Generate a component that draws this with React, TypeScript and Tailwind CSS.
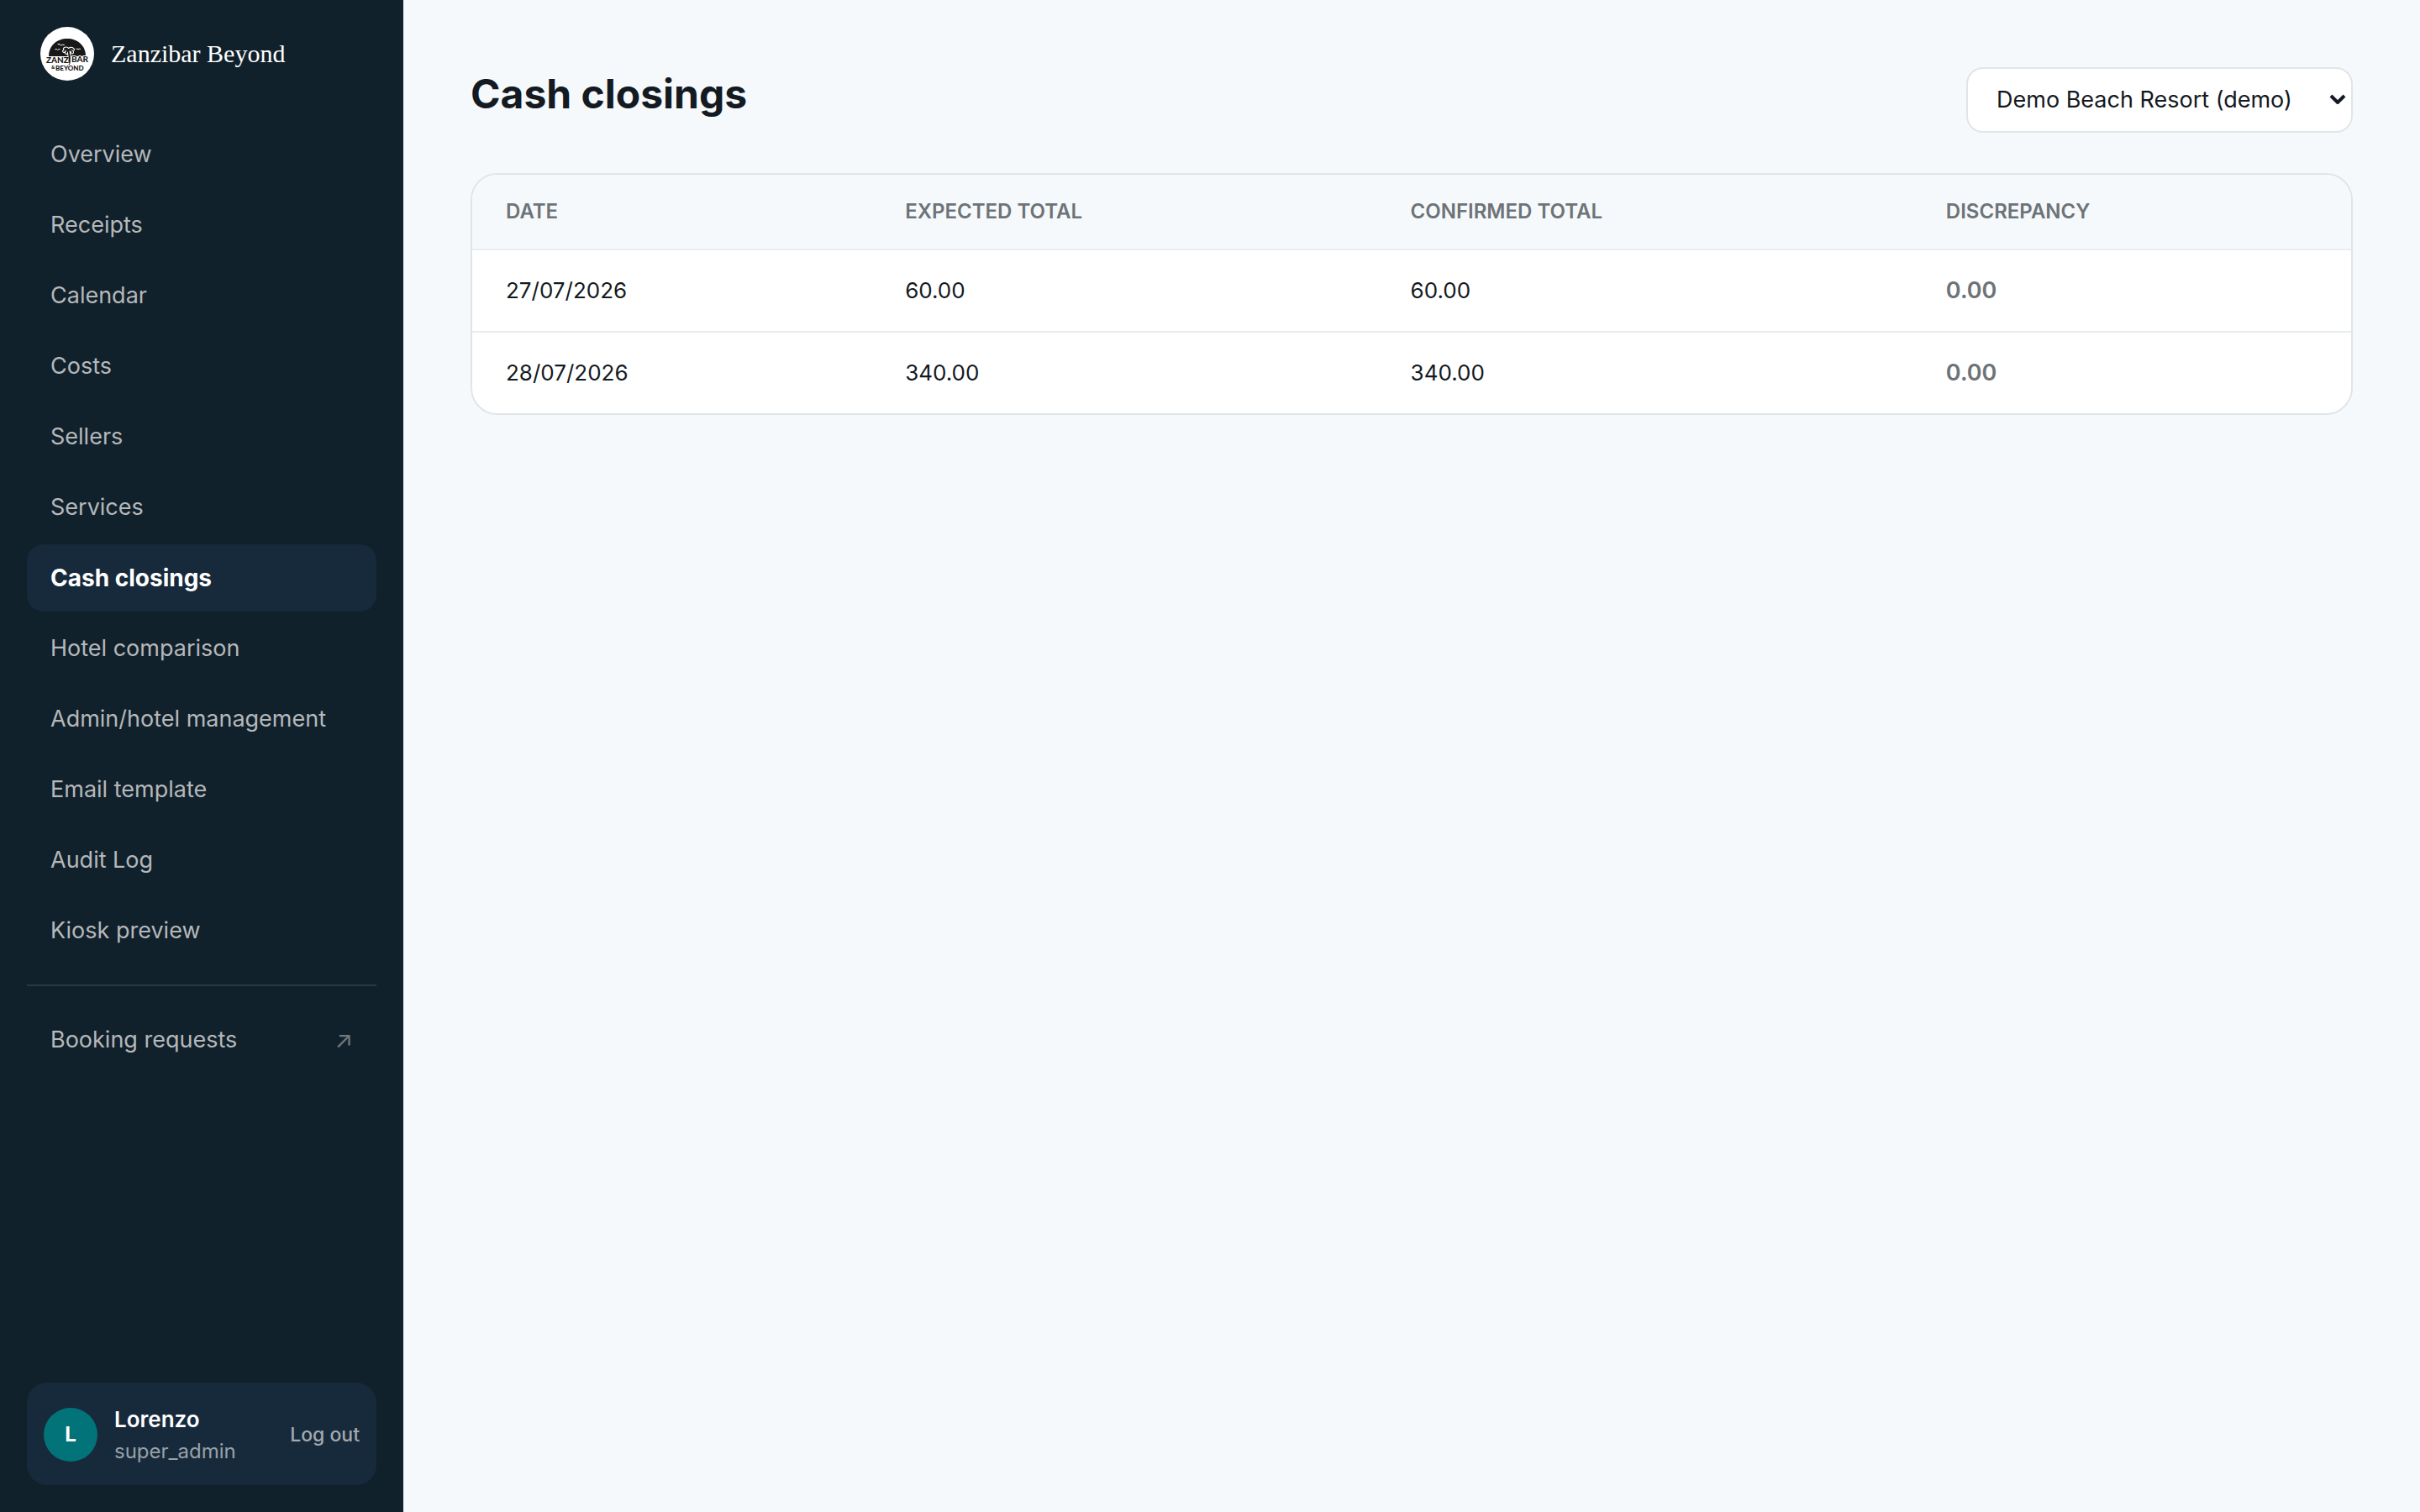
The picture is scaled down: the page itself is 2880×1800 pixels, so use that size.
import { useState } from "react";

interface NavItem {
    label: string;
    href: string;
}

interface Closing {
    date: string;
    expected: string;
    confirmed: string;
    discrepancy: string;
}

const NAV: NavItem[] = [
    { label: "Overview", href: "#overview" },
    { label: "Receipts", href: "#receipts" },
    { label: "Calendar", href: "#calendar" },
    { label: "Costs", href: "#costs" },
    { label: "Sellers", href: "#sellers" },
    { label: "Services", href: "#services" },
    { label: "Cash closings", href: "#cash-closings" },
    { label: "Hotel comparison", href: "#hotel-comparison" },
    { label: "Admin/hotel management", href: "#management" },
    { label: "Email template", href: "#email-template" },
    { label: "Audit Log", href: "#audit-log" },
    { label: "Kiosk preview", href: "#kiosk-preview" },
];

const CLOSINGS: Closing[] = [
    { date: "27/07/2026", expected: "60.00", confirmed: "60.00", discrepancy: "0.00" },
    { date: "28/07/2026", expected: "340.00", confirmed: "340.00", discrepancy: "0.00" },
];

const PALM =
    "M34.500 44c.6-6 .2-11-1-16M33.500 28c-2-2-4.500-1.500-5.500 1M33.500 28c-1-2.500-3-3-4.500-2M33.500 28c1-2.500 4-3 5.500-1M33.500 28c2-1 4.500 0 4.500 2.500M33.500 28c-1.500 0-2.500 1.500-2.500 3";

function Logo() {
    return (
        <svg viewBox="0 0 64 64" className="size-16 shrink-0" aria-hidden="true">
            <circle cx="32" cy="32" r="32" fill="#fff" />
            {/* sun dome */}
            <path d="M10 35C10 22 20 14 32 14s22 8 22 21z" fill="#181818" />
            {/* birds */}
            <g fill="none" stroke="#fff" strokeWidth="1" strokeLinecap="round">
                <path d="M21 20.500q2.500-.5 3.500 1.500 2-1.500 4-.5" />
                <path d="M18 26.500q2-.5 2.500 1 1-1.200 2.500-1" />
                <path d="M43 26q1.500-.5 2 1 1-1.200 2.500-.8" />
            </g>
            {/* palm, its trunk stands in for the I */}
            <g fill="none" strokeLinecap="round" strokeLinejoin="round">
                <path d={PALM} stroke="#fff" strokeWidth="4" />
                <path d={PALM} stroke="#181818" strokeWidth="1.800" />
            </g>
            <g
                fill="#181818"
                stroke="#fff"
                strokeWidth="2"
                strokeLinejoin="round"
                paintOrder="stroke"
                fontFamily="Lato, sans-serif"
                fontWeight="900"
            >
                <text x="7" y="43" fontSize="10">ZANZ</text>
                <text x="37" y="42" fontSize="10">BAR</text>
                <text x="13" y="50" fontSize="6">&amp;</text>
                <text x="18" y="52" fontSize="8">BEYOND</text>
            </g>
            <path d="M34.500 42c.2-2.500.2-5 0-8" fill="none" stroke="#181818" strokeWidth="1.800" strokeLinecap="round" />
        </svg>
    );
}

function Sidebar() {
    const [active, setActive] = useState("Cash closings");

    return (
        <aside className="flex w-[480px] shrink-0 flex-col bg-[#11212b] p-8">
            <div className="mb-12 flex items-center gap-5 px-4">
                <Logo />
                <span className="font-['Liberation_Serif',serif] text-3xl leading-10 text-white">Zanzibar Beyond</span>
            </div>

            <nav className="flex flex-col gap-1">
                {NAV.map((item) => (
                    <a
                        key={item.label}
                        href={item.href}
                        onClick={() => setActive(item.label)}
                        className={
                            item.label === active
                                ? "rounded-[20px] bg-[#172a3b] px-7 py-5 text-[28px] leading-10 font-bold text-white"
                                : "rounded-[20px] px-7 py-5 text-[27px] leading-10 text-[#b5b8bb]"
                        }
                    >
                        {item.label}
                    </a>
                ))}
            </nav>

            <div className="mt-6 border-t-2 border-[#293842] pt-6">
                <a
                    href="#booking-requests"
                    className="flex items-center justify-between rounded-[20px] px-7 py-5 text-[27px] leading-10 text-[#b5b8bb]"
                >
                    Booking requests
                    <span className="text-[28px] text-[#70797f]">↗</span>
                </a>
            </div>

            <div className="mt-auto flex items-center gap-5 rounded-3xl bg-[#172a3b] px-5 pt-6 pb-[22px]">
                <div className="flex size-16 shrink-0 items-center justify-center rounded-full bg-[#027378] text-2xl font-bold text-white">
                    L
                </div>
                <div className="min-w-0 flex-1">
                    <div className="text-[26px] leading-10 font-semibold text-white">Lorenzo</div>
                    <div className="text-2xl leading-9 text-[#98a1a8]">super_admin</div>
                </div>
                <button type="button" className="text-[23px] font-medium text-[#a2a9af]">
                    Log out
                </button>
            </div>
        </aside>
    );
}

function HotelSelect() {
    return (
        <div className="relative">
            <select
                aria-label="Hotel"
                className="h-[78px] w-[460px] appearance-none rounded-[20px] border-2 border-[#e0e5e8] bg-white pr-12 pl-[34px] text-[27px] text-[#141a22]"
            >
                <option>Demo Beach Resort (demo)</option>
            </select>
            <svg
                viewBox="0 0 20 12"
                className="pointer-events-none absolute top-8 right-2 h-3 w-5"
                fill="none"
                stroke="#141a22"
                strokeWidth="4"
                aria-hidden="true"
            >
                <path d="M2 2l8 8 8-8" />
            </svg>
        </div>
    );
}

function ClosingsTable() {
    return (
        <div className="overflow-hidden rounded-[32px] border-2 border-[#e0e5e8] bg-white">
            <table className="w-full table-fixed text-left">
                <thead className="bg-[#f5f9fc] text-2xl leading-10 text-[#6d7377]">
                    <tr className="border-b-2 border-[#e8edf0]">
                        <th className="w-[21.25%] px-10 py-6 font-semibold">DATE</th>
                        <th className="w-[26.9%] px-10 py-6 font-semibold">EXPECTED TOTAL</th>
                        <th className="w-[28.5%] px-10 py-6 font-semibold">CONFIRMED TOTAL</th>
                        <th className="px-10 py-6 font-semibold">DISCREPANCY</th>
                    </tr>
                </thead>
                <tbody className="text-[26px] leading-10 text-[#141a22]">
                    {CLOSINGS.map((c) => (
                        <tr key={c.date} className="border-b-2 border-[#e8edf0] last:border-b-0">
                            <td className="px-10 py-7">{c.date}</td>
                            <td className="px-10 py-7">{c.expected}</td>
                            <td className="px-10 py-7">{c.confirmed}</td>
                            <td className="px-10 py-7 text-[27px] font-semibold text-[#6d7377]">{c.discrepancy}</td>
                        </tr>
                    ))}
                </tbody>
            </table>
        </div>
    );
}

export default function App() {
    return (
        <div className="flex min-h-screen bg-[#f5f9fc] font-[Inter,sans-serif]">
            <Sidebar />
            <main className="min-w-0 flex-1 p-20">
                <div className="mb-12 flex items-start justify-between">
                    <h1 className="text-5xl leading-[64px] font-bold text-[#141a22]">Cash closings</h1>
                    <HotelSelect />
                </div>
                <ClosingsTable />
            </main>
        </div>
    );
}
